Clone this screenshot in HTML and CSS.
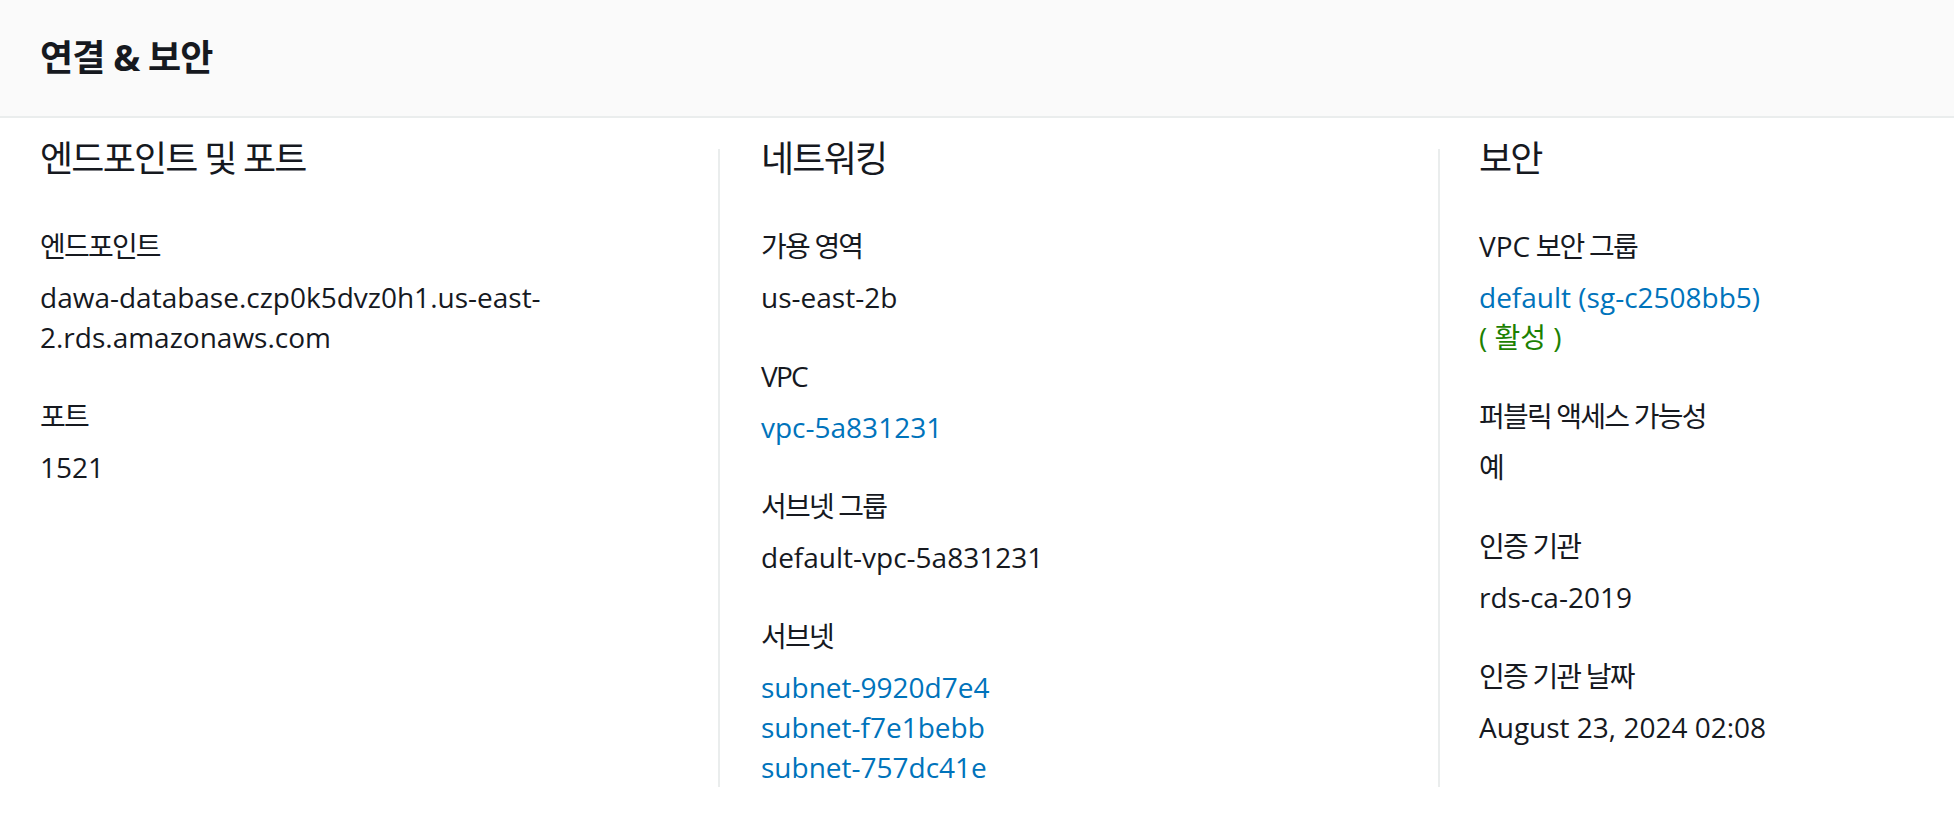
FILE: index.html
```html
<!DOCTYPE html>
<html lang="ko">
<head>
<meta charset="utf-8">
<title>연결 &amp; 보안</title>
<link rel="stylesheet" href="styles.css">
</head>
<body>
<div class="container">
  <div class="container-header">
    <h2 class="title">연결 &amp; 보안</h2>
  </div>
  <div class="columns">
    <section class="column">
      <h3 class="col-heading">엔드포인트 및 포트</h3>
      <div class="kv-list">
        <div class="kv">
          <div class="kv-label">엔드포인트</div>
          <div class="kv-value">dawa-database.czp0k5dvz0h1.us-east-<br>2.rds.amazonaws.com</div>
        </div>
        <div class="kv">
          <div class="kv-label">포트</div>
          <div class="kv-value">1521</div>
        </div>
      </div>
    </section>
    <section class="column column-sep">
      <h3 class="col-heading">네트워킹</h3>
      <div class="kv-list">
        <div class="kv">
          <div class="kv-label">가용 영역</div>
          <div class="kv-value">us-east-2b</div>
        </div>
        <div class="kv">
          <div class="kv-label">VPC</div>
          <div class="kv-value"><a class="link" href="#">vpc-5a831231</a></div>
        </div>
        <div class="kv">
          <div class="kv-label">서브넷 그룹</div>
          <div class="kv-value">default-vpc-5a831231</div>
        </div>
        <div class="kv">
          <div class="kv-label">서브넷</div>
          <div class="kv-value">
            <a class="link block" href="#">subnet-9920d7e4</a>
            <a class="link block" href="#">subnet-f7e1bebb</a>
            <a class="link block" href="#">subnet-757dc41e</a>
          </div>
        </div>
      </div>
    </section>
    <section class="column column-sep column-last">
      <h3 class="col-heading">보안</h3>
      <div class="kv-list">
        <div class="kv">
          <div class="kv-label"><span class="latin">VPC</span> 보안 그룹</div>
          <div class="kv-value">
            <a class="link block" href="#">default (sg-c2508bb5)</a>
            <span class="status-ok">( 활성 )</span>
          </div>
        </div>
        <div class="kv">
          <div class="kv-label">퍼블릭 액세스 가능성</div>
          <div class="kv-value">예</div>
        </div>
        <div class="kv">
          <div class="kv-label">인증 기관</div>
          <div class="kv-value">rds-ca-2019</div>
        </div>
        <div class="kv">
          <div class="kv-label">인증 기관 날짜</div>
          <div class="kv-value">August 23, 2024 02:08</div>
        </div>
      </div>
    </section>
  </div>
</div>
</body>
</html>
```

FILE: styles.css
```css
html, body {
  margin: 0;
  padding: 0;
  background: #ffffff;
}

body {
  font-family: "Open Sans", "Noto Sans CJK KR", sans-serif;
  color: #16191f;
  font-size: 28px;
  line-height: 40px;
  overflow: hidden;
}

.container {
  width: 100%;
}

.container-header {
  height: 116px;
  background: #fafafa;
  border-bottom: 2px solid #eaeded;
  display: flex;
  align-items: center;
  padding: 0 40px;
}

.title {
  margin: 0;
  font-size: 36px;
  line-height: 40px;
  font-weight: 700;
  letter-spacing: -0.8px;
  color: #16191f;
}

.columns {
  display: grid;
  grid-template-columns: 718px 720px 1fr;
  padding-top: 19px;
  padding-bottom: 41px;
}

.column {
  position: relative;
  padding-left: 40px;
}

.column-sep {
  padding-left: 43px;
}

.column-last {
  padding-left: 41px;
}

.column-sep::before {
  content: "";
  position: absolute;
  left: 0;
  top: 12px;
  bottom: 0;
  width: 2px;
  background: #eaeded;
}

.col-heading {
  margin: 0 0 45px 0;
  font-size: 36px;
  line-height: 44px;
  font-weight: 400;
  letter-spacing: -1.8px;
  color: #16191f;
}

.kv-list {
  display: flex;
  flex-direction: column;
  gap: 39px;
}

.kv-label {
  line-height: 40px;
  margin-bottom: 11px;
  letter-spacing: -1.8px;
  color: #16191f;
}

.latin {
  letter-spacing: 0;
}

.kv-value {
  line-height: 40px;
  color: #16191f;
}

.link {
  color: #0073bb;
  text-decoration: none;
}

.block {
  display: block;
}

.status-ok {
  color: #1d8102;
}
```
